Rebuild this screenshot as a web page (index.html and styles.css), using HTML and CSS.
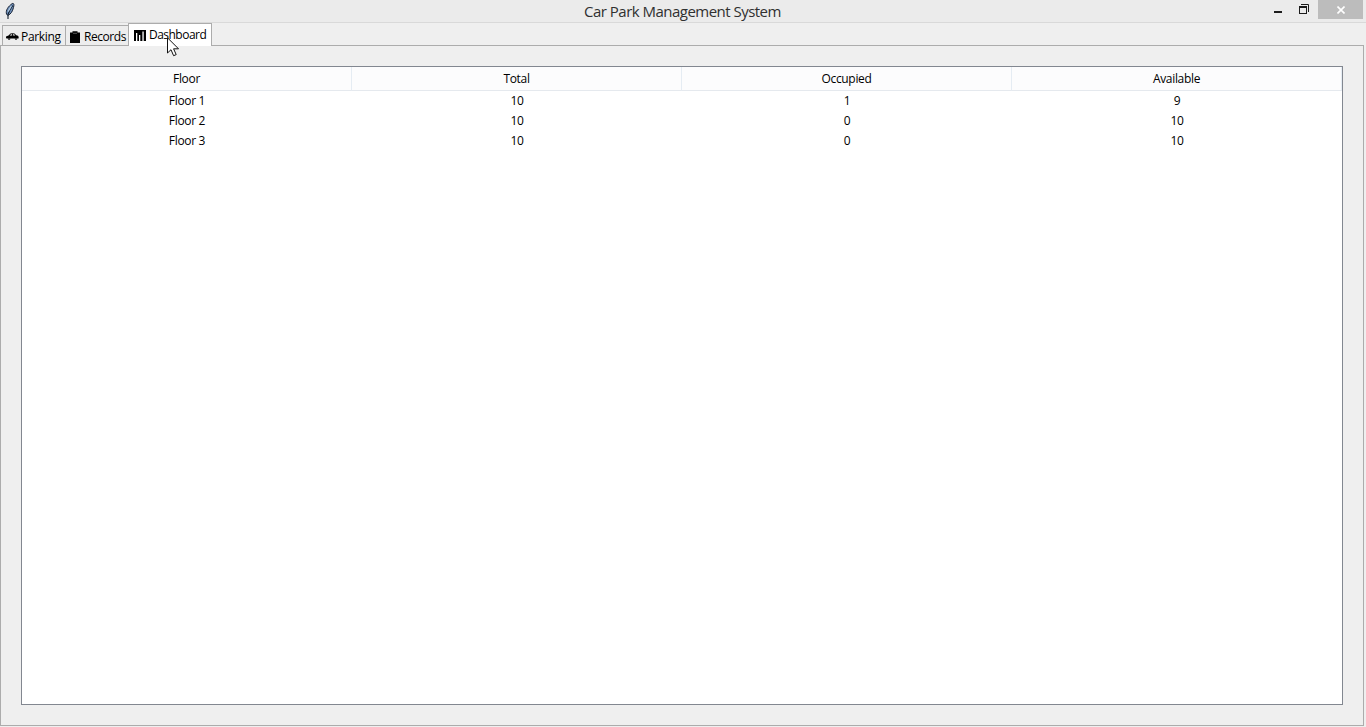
FILE: index.html
```html
<!DOCTYPE html>
<html lang="en">
<head>
    <meta charset="UTF-8">
    <meta name="viewport" content="width=device-width, initial-scale=1.0">
    <title>Car Park Management System</title>
    <link rel="stylesheet" href="styles.css">
</head>
<body>

    <header class="titlebar">
        <svg class="feather" width="14" height="18" viewBox="0 0 14 18">
            <path d="M4.800 13.500L3.500 12C2.500 8.500 5 4.500 9.300 1.500C11 1 11.300 2.500 10.500 5.500C9.500 9.500 8 12 4.800 13.500z" fill="#6d8fba" stroke="#1a2436"/>
            <path d="M5 17V12.500C6 9.500 7.500 6.500 9.800 3.500" fill="none" stroke="#14202f" stroke-width="1.100"/>
            <path d="M5.200 9.500L8.300 4" fill="none" stroke="#b5cde4" stroke-width="1.200"/>
        </svg>
        <h1 class="title"><span class="title-text">Car Park Management System</span></h1>
        <div class="controls">
            <button class="control minimize" aria-label="Minimize">
                <svg width="8" height="2" viewBox="0 0 8 2"><path d="M0 0h8v2H0z" fill="#1c1c1c"/></svg>
            </button>
            <button class="control restore" aria-label="Restore">
                <svg width="10" height="10" viewBox="0 0 10 10">
                    <path d="M2 .5h7.500V8" fill="none" stroke="#1c1c1c"/>
                    <path d="M0 2h8v8H0zM1 4v5h6V4z" fill="#1c1c1c" fill-rule="evenodd"/>
                </svg>
            </button>
            <button class="control close" aria-label="Close">
                <svg width="8" height="8" viewBox="0 0 8 8"><path d="M.5 .5l7 7M7.500 .5l-7 7" stroke="#fff" stroke-width="1.600"/></svg>
            </button>
        </div>
    </header>

    <nav class="tabs">
        <a class="tab tab-parking">
            <svg width="13" height="7" viewBox="0 0 13 7">
                <path d="M0 3.500L2.500 2.500L4.500 .6Q6.500 -.1 8.500 .6L10.300 2.300L12 2.800Q13 4 12.500 5.500H.5Q-.2 4.500 0 3.500z" fill="#000"/>
                <path d="M3.800 2.500L5 1.200H6v1.300zM6.900 1.200h1.200l1.200 1.300H6.900z" fill="#eee"/>
                <path d="M1.800 5.500a1.300 1.300 0 0 0 2.600 0zM8.700 5.500a1.300 1.300 0 0 0 2.600 0z" fill="#000"/>
            </svg>
            <span class="label">Parking</span>
        </a>
        <a class="tab tab-records">
            <svg width="10" height="12" viewBox="0 0 10 12">
                <path d="M0 1.500h2.500V.3h5v1.200H10V12H0z" fill="#000"/>
                <path d="M3 2.300h4" stroke="#777" stroke-width=".7"/>
            </svg>
            <span class="label">Records</span>
        </a>
        <a class="tab tab-dashboard active">
            <svg width="12" height="11" viewBox="0 0 12 11">
                <path d="M0 0h12v11H0z" fill="#000"/>
                <path d="M2 3h1.300v8H2zM5 5h1.300v6H5zM8.400 1.500h1.300V11H8.400z" fill="#fff"/>
            </svg>
            <span class="label">Dashboard</span>
        </a>
    </nav>

    <main class="panel">
        <div class="tree">
            <table class="floors">
                <thead>
                    <tr><th>Floor</th><th>Total</th><th>Occupied</th><th>Available</th></tr>
                </thead>
                <tbody>
                    <tr><td>Floor 1</td><td>10</td><td>1</td><td>9</td></tr>
                    <tr><td>Floor 2</td><td>10</td><td>0</td><td>10</td></tr>
                    <tr><td>Floor 3</td><td>10</td><td>0</td><td>10</td></tr>
                </tbody>
            </table>
        </div>
    </main>

    <!-- Mouse pointer -->
    <svg class="pointer" width="13" height="20" viewBox="0 0 13 20">
        <path d="M.5 .8V16L4 12.700L6.600 18.700L9.200 17.600L6.600 11.800H11.500z" fill="#fff" stroke="#111"/>
    </svg>

</body>
</html>
```

FILE: styles.css
```css
* {
    box-sizing: border-box;
}
body {
    margin: 0;
    height: 100vh;
    display: flex;
    flex-direction: column;
    overflow: hidden;
    background: #efefef;
    color: #000;
    font-family: "Open Sans", "Noto Sans", sans-serif;
    font-size: 12px;
    letter-spacing: -0.32px;
}
svg {
    display: block;
    flex: none;
}

/* Window title bar */
.titlebar {
    display: grid;
    grid-template-columns: 100px 1fr 100px;
    height: 23px;
    flex: none;
    background: #ebebeb;
    border-bottom: 1px solid #d9d9d9;
}
.feather {
    margin: 2px 0 0 3px;
}
.title {
    margin: 0;
    padding: 1px 1px 0 0;
    font-size: 15px;
    font-weight: 400;
    line-height: 21px;
    text-align: center;
    color: #303030;
}
.title-text {
    letter-spacing: -0.52px;
}
.controls {
    display: flex;
    align-items: flex-start;
    justify-content: flex-end;
    padding-right: 3px;
}
.control {
    display: flex;
    padding: 0;
    border: none;
    background: none;
}
.minimize {
    margin: 11px 17px 0 0;
}
.restore {
    margin: 4px 9px 0 0;
}
.close {
    width: 45px;
    height: 19px;
    align-items: center;
    justify-content: center;
    background: #bcbcbc;
}

/* Notebook tabs */
.tabs {
    display: flex;
    align-items: flex-end;
    height: 23px;
    flex: none;
    padding-left: 2px;
}
.tab {
    display: flex;
    align-items: center;
    height: 21px;
    padding-top: 2px;
    padding-left: 4px;
    gap: 2px;
    border: 1px solid #acacac;
    background: #ededed;
    white-space: nowrap;
}
.tab-parking {
    width: 64px;
    padding-left: 3px;
}
.tab-records {
    width: 63px;
    margin-left: -1px;
    gap: 4px;
    border-right: none;
    letter-spacing: -0.45px;
}
.tab-dashboard {
    width: 84px;
    gap: 3px;
    padding-top: 0;
    padding-left: 5px;
    letter-spacing: -0.52px;
}
.active {
    height: 23px;
    background: #fff;
    border-bottom: none;
}
.label {
    line-height: 16px;
}

/* Notebook page, its top line is open under the active tab */
.panel {
    flex: 1;
    display: flex;
    width: 1364px;
    margin: -1px 0 1px;
    padding: 21px 20px 20px;
    border: 1px solid #acacac;
    border-top: none;
    background: linear-gradient(#acacac, #acacac) 211px 0 / 100% 1px no-repeat,
                linear-gradient(#acacac, #acacac) 0 0 / 128px 1px no-repeat;
}
.tree {
    flex: 1;
    background: #fff;
    border: 1px solid #828790;
}
.floors {
    width: 100%;
    table-layout: fixed;
    border-collapse: separate;
    border-spacing: 0;
    text-align: center;
}
th {
    height: 24px;
    padding: 0;
    font-weight: 400;
    line-height: 16px;
    background: #fcfcfd;
    border-right: 1px solid #e5ecf3;
    border-bottom: 1px solid #e5e9ee;
}
td {
    height: 20px;
    padding: 0;
    line-height: 16px;
}

.pointer {
    position: absolute;
    left: 167px;
    top: 37px;
}
```
